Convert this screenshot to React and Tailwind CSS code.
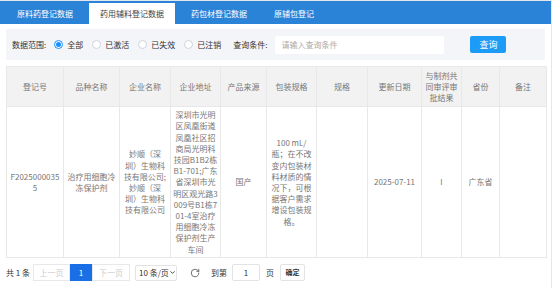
import { RotateCw, ChevronDown } from 'lucide-react';

const font = { fontFamily: '"Noto Sans CJK SC", "Noto Sans", sans-serif' };

const tabs = ['原料药登记数据', '药用辅料登记数据', '药包材登记数据', '原辅包登记'];
const radios = ['全部', '已激活', '已失效', '已注销'];

const cols = [57, 56, 51, 50, 46, 50, 51, 54, 40, 38, 47];

const headers = [
  ['登记号'],
  ['品种名称'],
  ['企业名称'],
  ['企业地址'],
  ['产品来源'],
  ['包装规格'],
  ['规格'],
  ['更新日期'],
  ['与制剂共', '同审评审', '批结果'],
  ['省份'],
  ['备注'],
];

const row = [
  ['F2025000035', '5'],
  ['治疗用细胞冷', '冻保护剂'],
  ['妙顺（深', '圳）生物科', '技有限公司;', '妙顺（深', '圳）生物科', '技有限公司'],
  [
    '深圳市光明', '区凤凰街道', '凤凰社区招', '商局光明科', '技园B1B2栋', 'B1-701;广东',
    '省深圳市光', '明区观光路3', '009号B1栋7', '01-4室治疗', '用细胞冷冻', '保护剂生产', '车间',
  ],
  ['国产'],
  ['100 mL/', '瓶；在不改', '变内包装材', '料材质的情', '况下，可根', '据客户需求', '增设包装规', '格。'],
  [],
  ['2025-07-11'],
  ['I'],
  ['广东省'],
  [],
];

const Lines = ({ lines }) =>
  lines.map((l, i) => (
    <div key={i} className="whitespace-nowrap">
      {l}
    </div>
  ));

const App = () => {
  return (
    <div style={font} className="w-[554px] h-[288px] bg-white overflow-hidden">
      <div className="w-[552px] h-[288px] border-r border-t border-[#e4e7ec]">
        {/* tabs */}
        <div className="h-[23px] bg-[#2b83d8] flex items-end gap-[5px] pl-[6px]">
          {tabs.map((t, i) => (
            <div
              key={t}
              className={
                i === 1
                  ? 'h-[21px] px-[11px] flex items-center bg-white text-[#444] text-[8px]'
                  : 'h-[21px] px-[11px] flex items-center text-white text-[8px]'
              }
            >
              {t}
            </div>
          ))}
        </div>

        <div className="px-[6px]">
          {/* filter */}
          <div className="mt-[5px] h-[31px] bg-[#f3f5f9] flex items-center pl-[6px] text-[8px] text-[#333]">
            <span>数据范围:</span>
            <div className="flex items-center ml-[8px]">
              {radios.map((r, i) => (
                <label key={r} className="flex items-center mr-[9px]">
                  <span
                    className={
                      i === 0
                        ? 'w-[9px] h-[9px] rounded-full border border-[#1890ff] bg-white flex items-center justify-center'
                        : 'w-[9px] h-[9px] rounded-full border border-[#cfd3d9] bg-white'
                    }
                  >
                    {i === 0 && <span className="w-[5px] h-[5px] rounded-full bg-[#1890ff]" />}
                  </span>
                  <span className="ml-[4px]">{r}</span>
                </label>
              ))}
            </div>
            <span className="ml-[3px]">查询条件:</span>
            <div className="ml-[8px] w-[169px] h-[18px] bg-white rounded-[2px] flex items-center pl-[6px] text-[#aaa]">
              请输入查询条件
            </div>
            <button className="ml-[26px] w-[36px] h-[17px] bg-[#1c9cf6] text-white text-[9px] rounded-[2px] flex items-center justify-center">
              查询
            </button>
          </div>

          {/* table */}
          <table className="mt-[6px] table-fixed border-collapse w-[540px] text-[8px] text-[#777] leading-[11.2px]">
            <colgroup>
              {cols.map((w, i) => (
                <col key={i} style={{ width: w }} />
              ))}
            </colgroup>
            <thead>
              <tr className="h-[40px] bg-[#f2f2f2]">
                {headers.map((h, i) => (
                  <th key={i} className="border border-[#e8e8e8] font-normal text-center align-middle px-[2px]">
                    <Lines lines={h} />
                  </th>
                ))}
              </tr>
            </thead>
            <tbody>
              <tr className="h-[151px]">
                {row.map((c, i) => (
                  <td key={i} className="border border-[#e8e8e8] text-center align-middle px-[2px]">
                    <Lines lines={c} />
                  </td>
                ))}
              </tr>
            </tbody>
          </table>

          {/* pagination */}
          <div className="mt-[6px] h-[17px] flex items-center text-[8px] text-[#333] whitespace-nowrap">
            <span className="w-[27px]">共 1 条</span>
            <div className="w-[37px] h-[17px] border border-[#e8e8e8] text-[#ccc] flex items-center justify-center">
              上一页
            </div>
            <div className="w-[22px] h-[17px] bg-[#1a6fe6] text-white flex items-center justify-center">1</div>
            <div className="w-[38px] h-[17px] border border-[#e8e8e8] text-[#ccc] flex items-center justify-center">
              下一页
            </div>
            <div className="ml-[5px] w-[42px] h-[16px] border border-[#e3e3e3] rounded-[2px] flex items-center justify-between px-[3px] shrink-0">
              <span className="whitespace-nowrap">10 条/页</span>
              <ChevronDown size={7} strokeWidth={3} color="#333" className="shrink-0" />
            </div>
            <RotateCw size={10} strokeWidth={2} color="#555" className="ml-[13px] shrink-0" />
            <span className="ml-[11px]">到第</span>
            <div className="ml-[5px] w-[28px] h-[17px] border border-[#e3e3e3] rounded-[2px] flex items-center justify-center">
              1
            </div>
            <span className="ml-[6px]">页</span>
            <div className="ml-[6px] w-[25px] h-[17px] border border-[#e3e3e3] rounded-[2px] flex items-center justify-center text-[7px] font-bold">
              确定
            </div>
          </div>
        </div>
      </div>
    </div>
  );
};

export default App;
